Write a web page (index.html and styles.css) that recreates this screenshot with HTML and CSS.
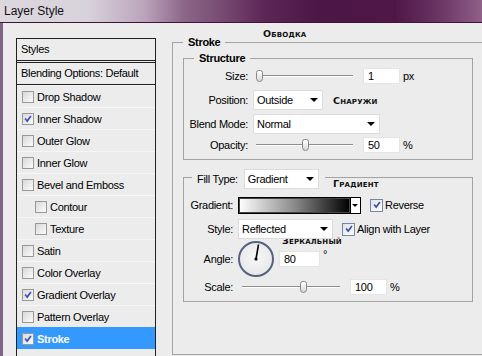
FILE: index.html
```html
<!DOCTYPE html>
<html lang="en">
<head>
  <meta charset="UTF-8" />
  <title>Layer Style</title>
  <link rel="stylesheet" href="styles.css">
</head>
<body>
  <div class="window">
    <div class="titlebar">Layer Style</div>

    <div class="client">
      <!-- Styles list -->
      <div class="styles-list">
        <div class="list-head">Styles</div>
        <div class="list-head">Blending Options: Default</div>
        <div class="list-item"><span class="cb"></span>Drop Shadow</div>
        <div class="list-item"><span class="cb"><svg viewBox="0 0 12 12"><path d="M2.5 5.5l2.5 3L9.5 2.5" /></svg></span>Inner Shadow</div>
        <div class="list-item"><span class="cb"></span>Outer Glow</div>
        <div class="list-item"><span class="cb"></span>Inner Glow</div>
        <div class="list-item"><span class="cb"></span>Bevel and Emboss</div>
        <div class="list-item sub"><span class="cb"></span>Contour</div>
        <div class="list-item sub"><span class="cb"></span>Texture</div>
        <div class="list-item"><span class="cb"></span>Satin</div>
        <div class="list-item"><span class="cb"></span>Color Overlay</div>
        <div class="list-item"><span class="cb"><svg viewBox="0 0 12 12"><path d="M2.5 5.5l2.5 3L9.5 2.5" /></svg></span>Gradient Overlay</div>
        <div class="list-item"><span class="cb"></span>Pattern Overlay</div>
        <div class="list-item selected"><span class="cb"><svg viewBox="0 0 12 12"><path d="M2.5 5.5l2.5 3L9.5 2.5" /></svg></span>Stroke</div>
      </div>

      <!-- Stroke settings -->
      <div class="panel">
        <span class="note note-title">Обводка</span>
        <span class="note note-gradient">Градиент</span>
        <span class="note note-style">Зеркальный</span>

        <fieldset class="group outer">
          <legend>Stroke</legend>

          <fieldset class="group structure">
            <legend>Structure</legend>
            <div class="row">
              <span class="lbl">Size:</span>
              <div class="slider"><span class="thumb" style="left: 0px"></span></div>
              <span class="field">1</span><span class="unit">px</span>
            </div>
            <div class="row">
              <span class="lbl">Position:</span>
              <span class="select select-position">Outside</span>
              <span class="note-inline">Снаружи</span>
            </div>
            <div class="row">
              <span class="lbl">Blend Mode:</span>
              <span class="select select-blend">Normal</span>
            </div>
            <div class="row row-short">
              <span class="lbl">Opacity:</span>
              <div class="slider"><span class="thumb" style="left: 46px"></span></div>
              <span class="field">50</span><span class="unit">%</span>
            </div>
          </fieldset>

          <fieldset class="group fill">
            <legend><span class="lbl-inline">Fill Type:</span><span class="select select-fill">Gradient</span></legend>
            <div class="row">
              <span class="lbl">Gradient:</span>
              <span class="swatch"></span><span class="swatch-btn"></span>
              <span class="check"><span class="cb blue"><svg viewBox="0 0 12 12"><path d="M2.5 5.5l2.5 3L9.5 2.5" /></svg></span>Reverse</span>
            </div>
            <div class="row">
              <span class="lbl">Style:</span>
              <span class="select select-style">Reflected</span>
              <span class="check"><span class="cb blue"><svg viewBox="0 0 12 12"><path d="M2.5 5.5l2.5 3L9.5 2.5" /></svg></span>Align with Layer</span>
            </div>
            <div class="row row-angle">
              <span class="lbl">Angle:</span>
              <span class="dial">
                <svg viewBox="0 0 32 32"><line x1="16" y1="16" x2="18.5" y2="1.5" /><circle cx="16" cy="16" r="1.6" /></svg>
              </span>
              <span class="field field-angle">80</span><span class="unit deg">°</span>
            </div>
            <div class="row row-scale">
              <span class="lbl">Scale:</span>
              <div class="slider slider-scale"><span class="thumb" style="left: 58px"></span></div>
              <span class="field">100</span><span class="unit">%</span>
            </div>
          </fieldset>
        </fieldset>
      </div>
    </div>
  </div>
</body>
</html>
```

FILE: styles.css
```css
/* General */
html,
body {
  margin: 0;
  padding: 0;
}

body {
  background: #ececec;
  font-family: "Liberation Sans", Arial, sans-serif;
  font-size: 11px;
  letter-spacing: -0.3px;
  color: #000;
}

.window {
  width: 482px;
  height: 356px;
  display: flex;
  flex-direction: column;
  overflow: hidden;
}

/* Title bar */
.titlebar {
  height: 22px;
  line-height: 22px;
  padding-left: 4px;
  font-size: 12px;
  letter-spacing: 0;
  color: #111;
  border-bottom: 1px solid #3e1538;
  background: linear-gradient(90deg, #dcd8de 0%, #d8d2db 18%, #bba4bb 30%, #8c6789 38%, #7a4f76 45%, #5c2656 55%, #4c1646 66%, #4e1748 82%, #6a3463 91%, #8f6088 100%);
}

.client {
  flex: 1;
  display: flex;
  padding-left: 13px;
  border-left: 3px solid #82648a;
  overflow: hidden;
}

/* Styles list */
.styles-list {
  width: 140px;
  flex-shrink: 0;
  margin-top: 15px;
  box-sizing: border-box;
  border-left: 1px solid #222;
  border-right: 1px solid #222;
}

.list-head {
  height: 21px;
  line-height: 21px;
  padding-left: 4px;
  border-top: 1px solid #222;
  border-bottom: 1px solid #222;
}

.list-head + .list-head {
  margin-top: 1px;
}

.list-item {
  height: 22px;
  box-sizing: border-box;
  display: flex;
  align-items: center;
  gap: 3px;
  padding-left: 5px;
  border-top: 1px solid #f6f6f6;
}

.list-item.sub {
  padding-left: 18px;
}

.list-item.selected {
  background: #3399ff;
  border-top-color: #3399ff;
  color: #fff;
  font-weight: bold;
}

/* Checkboxes */
.cb {
  width: 12px;
  height: 12px;
  box-sizing: border-box;
  flex-shrink: 0;
  border: 1px solid #999;
  background: linear-gradient(135deg, #d9d9d9, #fbfbfb);
  display: flex;
  align-items: center;
  justify-content: center;
}

.cb.blue {
  width: 13px;
  height: 13px;
  border-color: #7486aa;
  background: linear-gradient(135deg, #e2e2e2, #fff);
}

.cb svg {
  width: 10px;
  height: 10px;
}

.cb path {
  fill: none;
  stroke: #3a4fb8;
  stroke-width: 2;
}

/* Right panel */
.panel {
  position: relative;
  margin-left: 16px;
  padding-top: 13px;
  display: flex;
  flex-direction: column;
}

.note,
.note-inline {
  font-family: "DejaVu Sans", sans-serif;
  font-size: 9.5px;
  font-weight: bold;
  font-variant: small-caps;
  letter-spacing: 0.2px;
  line-height: 10px;
  color: #111;
}

.note {
  position: absolute;
}

.note-title {
  left: 91px;
  top: 6px;
}

.note-gradient {
  left: 161px;
  top: 156px;
}

.note-style {
  left: 110px;
  top: 213px;
}

.note-inline {
  margin-left: 10px;
  margin-top: 2px;
}

.group {
  margin: 0;
  border: 1px solid #a3a3a3;
  box-sizing: border-box;
  min-width: 0;
}

.group legend {
  font-weight: bold;
  line-height: 12px;
  padding: 0 5px;
  margin-left: 10px;
}

.outer {
  flex: 1;
  width: 320px;
  margin-bottom: 1px;
  padding: 3px 0 0 10px;
}

.outer > legend {
  line-height: 13px;
  margin-left: 0;
}

.structure,
.fill {
  width: 290px;
  padding: 0 0 5px 0;
}

.fill {
  margin-top: 5px;
  padding: 4px 0 4px 0;
}

.fill > legend {
  display: flex;
  align-items: center;
  font-weight: normal;
  padding: 4px 6px 0 5px;
  margin-left: 8px;
}

.lbl-inline {
  margin-right: 6px;
}

/* Rows */
.row {
  height: 24px;
  display: flex;
  align-items: center;
}

.row-short {
  height: 18px;
}

.row-angle {
  height: 36px;
}

.row-scale {
  height: 20px;
}

.lbl {
  width: 64px;
  flex-shrink: 0;
  text-align: right;
  margin-right: 5px;
}

.fill .lbl {
  width: 49px;
}

/* Sliders */
.slider {
  position: relative;
  width: 97px;
  height: 12px;
  margin-left: 3px;
}

.slider::before {
  content: "";
  position: absolute;
  left: 0;
  right: 0;
  top: 5px;
  height: 1px;
  background: #8d8d8d;
  border-bottom: 1px solid #fff;
}

.slider-scale {
  width: 98px;
  margin-left: 4px;
}

.thumb {
  position: absolute;
  top: 0;
  width: 7px;
  height: 12px;
  box-sizing: border-box;
  border: 1px solid #858585;
  border-radius: 3px 3px 4px 4px;
  background: linear-gradient(#fff, #d8d8d8);
}

/* Fields and selects */
.field {
  width: 37px;
  height: 16px;
  box-sizing: border-box;
  line-height: 14px;
  padding-left: 4px;
  margin-left: 10px;
  background: #fff;
  border: 1px solid #e4e4e4;
}

.field-angle {
  width: 41px;
  margin-left: 5px;
}

.unit {
  margin-left: 3px;
}

.unit.deg {
  align-self: flex-start;
  margin-top: 7px;
}

.select {
  position: relative;
  height: 20px;
  box-sizing: border-box;
  line-height: 18px;
  padding-left: 3px;
  background: #fff;
  border: 1px solid #dcdcdc;
}

.select::after {
  content: "";
  position: absolute;
  right: 4px;
  top: 7px;
  border-left: 4px solid transparent;
  border-right: 4px solid transparent;
  border-top: 4px solid #000;
}

.select-position {
  width: 70px;
}

.select-blend {
  width: 127px;
}

.select-fill {
  width: 75px;
}

.select-style {
  width: 95px;
}

/* Gradient picker */
.swatch {
  width: 113px;
  height: 17px;
  box-sizing: border-box;
  border: 1px solid #000;
  box-shadow: inset 0 0 0 1px #444;
  background: linear-gradient(90deg, #fff, #8a8a8a 50%, #000);
}

.swatch-btn {
  position: relative;
  width: 10px;
  height: 17px;
  box-sizing: border-box;
  border: 1px solid #000;
  border-left: none;
  background: #fff;
}

.swatch-btn::after {
  content: "";
  position: absolute;
  left: 1px;
  top: 6px;
  border-left: 3px solid transparent;
  border-right: 3px solid transparent;
  border-top: 3px solid #000;
}

.check {
  display: flex;
  align-items: center;
  gap: 2px;
  margin-left: 9px;
}

/* Angle dial */
.dial {
  width: 36px;
  height: 36px;
  box-sizing: border-box;
  border-radius: 50%;
  border: 2px solid #57627f;
  background: radial-gradient(circle at 50% 45%, #f7f7f7, #e3e3e3);
  display: flex;
  align-items: center;
  justify-content: center;
}

.dial svg {
  width: 32px;
  height: 32px;
}

.dial line {
  stroke: #000;
  stroke-width: 1.6;
}

.dial circle {
  fill: #000;
}
```
